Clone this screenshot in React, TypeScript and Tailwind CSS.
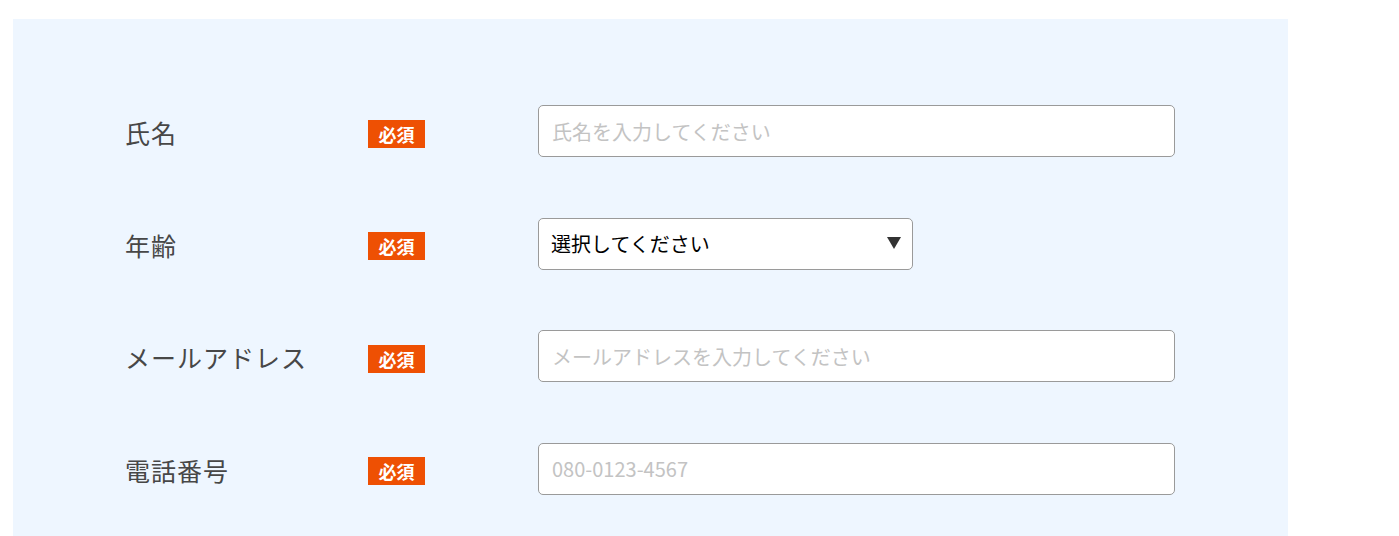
import React from "react";

const font = '"Noto Sans CJK JP", "Noto Sans", sans-serif';

function Badge() {
  return (
    <span
      className="mt-[5px] inline-flex h-[28px] w-[57px] items-center justify-center bg-[#ee5003] text-[18px] font-bold leading-none text-white"
      style={{ fontFamily: font }}
    >
      必須
    </span>
  );
}

function Row({ label, children }: { label: string; children: React.ReactNode }) {
  return (
    <div className="flex h-[52px] items-center">
      <div className="w-[243px] shrink-0 pt-[3px] text-[25px] leading-none tracking-[0.04em] text-[#474747]">{label}</div>
      <div className="flex w-[170px] shrink-0 items-center">
        <Badge />
      </div>
      {children}
    </div>
  );
}

function TextInput({ placeholder }: { placeholder: string }) {
  return (
    <input
      type="text"
      placeholder={placeholder}
      className="h-[52px] w-[637px] shrink-0 rounded-[5px] border border-[#9a9a9a] bg-white px-[13px] text-[20px] text-[#333] outline-none placeholder:text-[#c3c3c3]"
      style={{ fontFamily: font }}
    />
  );
}

export default function App() {
  return (
    <div className="min-h-[536px] bg-white pl-[13px] pt-[19px]" style={{ fontFamily: font }}>
      <div className="w-[1275px] bg-[#eef6ff] pb-[60px] pl-[112px] pt-[86px]">
        <div className="flex flex-col gap-[60.5px]">
          <Row label="氏名">
            <TextInput placeholder="氏名を入力してください" />
          </Row>
          <Row label="年齢">
            <div className="relative h-[52px] w-[375px] shrink-0">
              <select
                className="h-[52px] w-full appearance-none rounded-[5px] border border-[#9a9a9a] bg-white px-[12px] text-[20px] text-black outline-none"
                style={{ fontFamily: font }}
                defaultValue=""
              >
                <option value="">選択してください</option>
                <option>10代</option>
                <option>20代</option>
                <option>30代</option>
              </select>
              <svg
                className="pointer-events-none absolute right-[12px] top-[19px]"
                width="14"
                height="12"
                viewBox="0 0 14 12"
              >
                <path d="M0 0 H14 L7 12 Z" fill="#333" />
              </svg>
            </div>
          </Row>
          <Row label="メールアドレス">
            <TextInput placeholder="メールアドレスを入力してください" />
          </Row>
          <Row label="電話番号">
            <TextInput placeholder="080-0123-4567" />
          </Row>
        </div>
      </div>
    </div>
  );
}
